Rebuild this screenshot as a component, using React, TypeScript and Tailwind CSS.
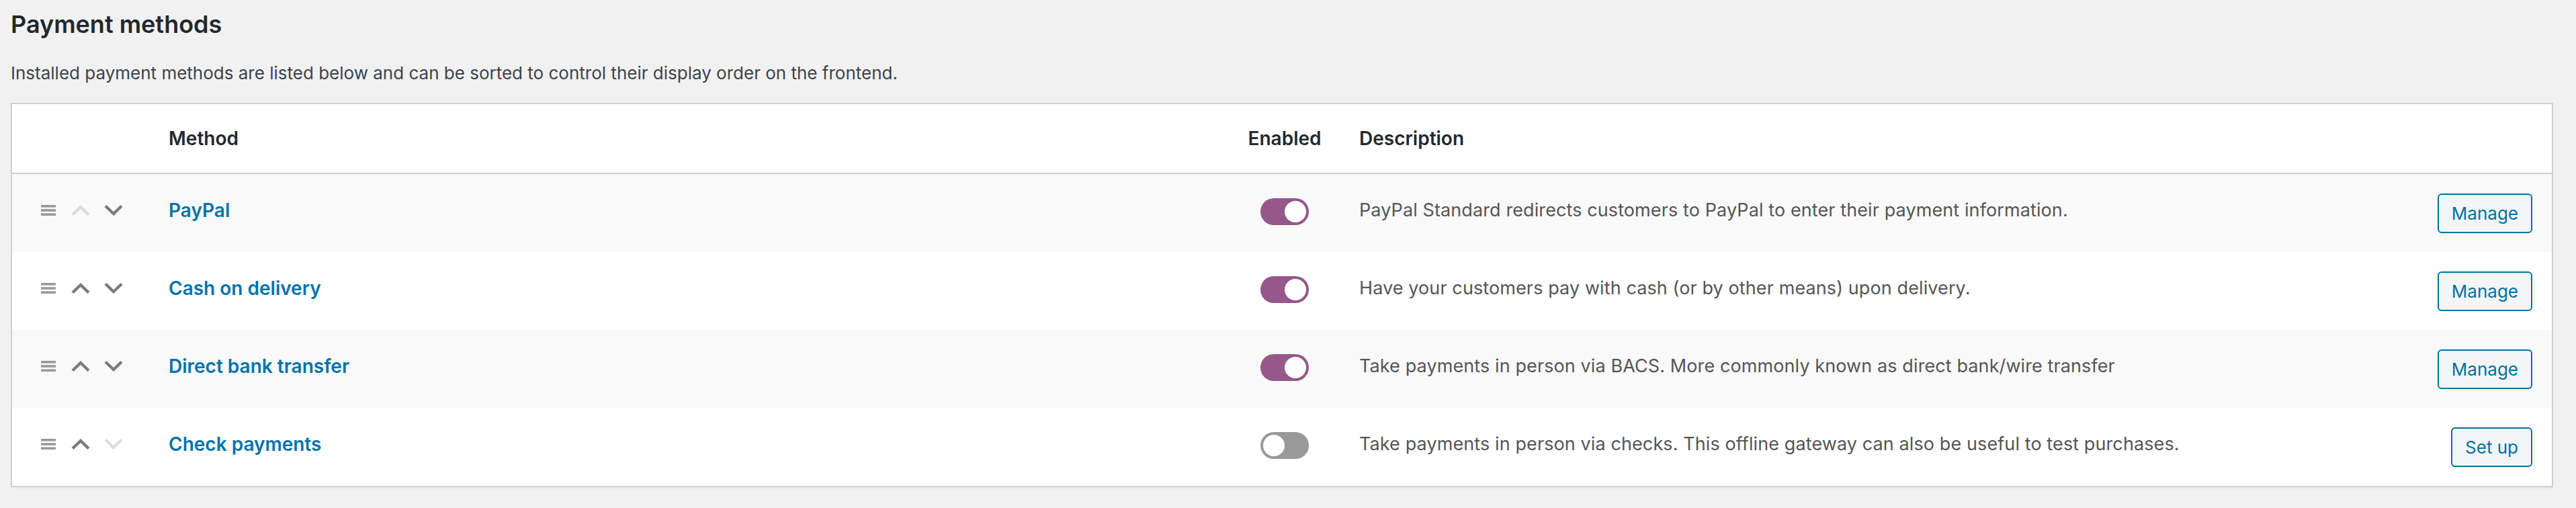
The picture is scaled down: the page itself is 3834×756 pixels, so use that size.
import React from 'react';

interface Gateway {
    name: string;
    description: string;
    enabled: boolean;
    action: string;
    canUp: boolean;
    canDown: boolean;
}

const gateways: Gateway[] = [
    {
        name: 'PayPal',
        description: 'PayPal Standard redirects customers to PayPal to enter their payment information.',
        enabled: true,
        action: 'Manage',
        canUp: false,
        canDown: true,
    },
    {
        name: 'Cash on delivery',
        description: 'Have your customers pay with cash (or by other means) upon delivery.',
        enabled: true,
        action: 'Manage',
        canUp: true,
        canDown: true,
    },
    {
        name: 'Direct bank transfer',
        description: 'Take payments in person via BACS. More commonly known as direct bank/wire transfer',
        enabled: true,
        action: 'Manage',
        canUp: true,
        canDown: true,
    },
    {
        name: 'Check payments',
        description: 'Take payments in person via checks. This offline gateway can also be useful to test purchases.',
        enabled: false,
        action: 'Set up',
        canUp: true,
        canDown: false,
    },
];

const cols = 'grid grid-cols-[213px_1621px_120px_1fr_200px]';

const DragHandle = () => (
    <svg width="22" height="16" viewBox="0 0 22 16" className="shrink-0">
        <rect x="0" y="0" width="22" height="3.6" fill="#999" />
        <rect x="0" y="6.2" width="22" height="3.6" fill="#999" />
        <rect x="0" y="12.4" width="22" height="3.6" fill="#999" />
    </svg>
);

const Chevron = ({ up, active }: { up: boolean; active: boolean }) => (
    <svg width="28" height="16" viewBox="0 0 28 16" className="shrink-0">
        <polyline
            points={up ? '2,14.5 14,3 26,14.5' : '2,1.5 14,13 26,1.5'}
            fill="none"
            stroke={active ? '#787c82' : '#dcdcde'}
            strokeWidth="4.4"
        />
    </svg>
);

const Toggle = ({ on }: { on: boolean }) => (
    <div
        className={`relative w-[72px] h-[40px] rounded-full ${on ? 'bg-[#96588a]' : 'bg-[#999]'}`}
    >
        <span
            className={`absolute top-[4px] w-[32px] h-[32px] rounded-full bg-white ${on ? 'right-[4px]' : 'left-[4px]'}`}
        />
    </div>
);

export default function App() {
    return (
        <div
            className="min-h-[756px] bg-[#f1f1f1] pl-[16px] pr-[34px] text-[#555]"
            style={{ fontFamily: 'Inter, "Noto Sans", sans-serif' }}
        >
            <h2 className="pt-[14px] text-[36px] leading-[44px] font-semibold text-[#23282d]">
                Payment methods
            </h2>
            <p className="mt-[31px] text-[26px] leading-[40px] text-[#3c434a]">
                Installed payment methods are listed below and can be sorted to control their display order on the frontend.
            </p>
            <div className="mt-[24px] border-2 border-[#ccd0d4] bg-white shadow-[0_2px_2px_rgba(0,0,0,0.04)]">
                <div className={`${cols} h-[104px] items-center border-b-2 border-[#ccd0d4] text-[28px] font-semibold text-[#23282d]`}>
                    <div />
                    <div className="pl-[20px]">Method</div>
                    <div className="text-center">Enabled</div>
                    <div className="pl-[51px]">Description</div>
                    <div />
                </div>
                {gateways.map((g, i) => (
                    <div
                        key={g.name}
                        className={`${cols} h-[116px] items-center text-[27px] ${i % 2 === 0 ? 'bg-[#f9f9f9]' : 'bg-white'}`}
                    >
                        <div className="flex items-center pl-[43px] pb-[8px]">
                            <DragHandle />
                            <span className="ml-[23px]">
                                <Chevron up active={g.canUp} />
                            </span>
                            <span className="ml-[21px]">
                                <Chevron up={false} active={g.canDown} />
                            </span>
                        </div>
                        <div className="pl-[20px] pb-[8px] text-[28px] font-semibold text-[#0073aa]">{g.name}</div>
                        <div className="flex justify-center pb-[4px]">
                            <Toggle on={g.enabled} />
                        </div>
                        <div className="pl-[51px] pb-[8px] whitespace-nowrap tracking-[0.1px]">{g.description}</div>
                        <div className="flex justify-end pr-[29px]">
                            <button className="h-[59px] px-[19px] rounded-[6px] border-2 border-[#0071a1] bg-[#f3f5f6] text-[26px] text-[#0071a1]">
                                {g.action}
                            </button>
                        </div>
                    </div>
                ))}
            </div>
        </div>
    );
}
